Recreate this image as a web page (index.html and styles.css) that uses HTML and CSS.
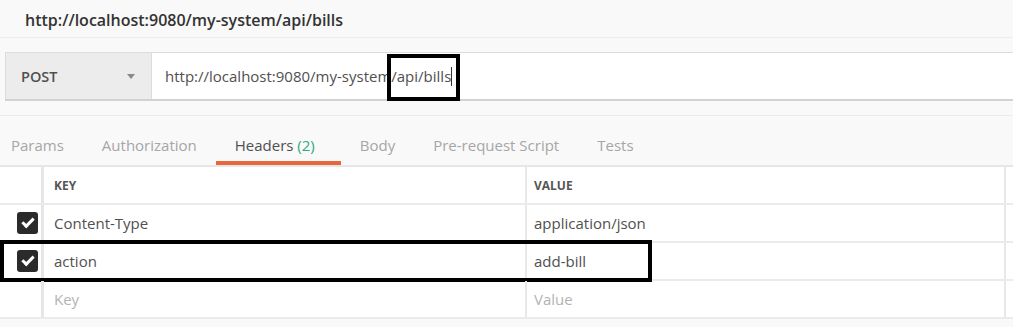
FILE: index.html
```html
<!DOCTYPE html>
<html lang="en">
<head>
    <meta charset="UTF-8">
    <title>POST my-system/api/bills</title>
    <link rel="stylesheet" href="styles.css">
</head>
<body>
    <div class="title">http://localhost:9080/my-system/api/bills</div>

    <div class="request">
        <div class="method">
            <span>POST</span>
            <span class="caret"></span>
        </div>
        <div class="url">
            <span>http://localhost:9080/my-system/api/bills</span><span class="cursor"></span>
            <div class="mark mark-url"></div>
        </div>
    </div>

    <div class="tabs">
        <div class="tab">Params</div>
        <div class="tab">Authorization</div>
        <div class="tab active">Headers <span class="count">(2)</span></div>
        <div class="tab">Body</div>
        <div class="tab">Pre-request Script</div>
        <div class="tab">Tests</div>
    </div>

    <div class="table">
        <div class="row head">
            <div class="cell check"></div>
            <div class="cell key">KEY</div>
            <div class="cell value">VALUE</div>
            <div class="cell extra"></div>
        </div>
        <div class="row">
            <div class="cell check"><span class="box"></span></div>
            <div class="cell key">Content-Type</div>
            <div class="cell value">application/json</div>
            <div class="cell extra"></div>
        </div>
        <div class="row">
            <div class="cell check"><span class="box"></span></div>
            <div class="cell key">action</div>
            <div class="cell value">add-bill</div>
            <div class="cell extra"></div>
            <div class="mark mark-row"></div>
        </div>
        <div class="row">
            <div class="cell check"></div>
            <div class="cell key placeholder">Key</div>
            <div class="cell value placeholder">Value</div>
            <div class="cell extra"></div>
        </div>
    </div>
</body>
</html>
```

FILE: styles.css
```css
/* General Styles */
body {
    margin: 0;
    background: #f9f9f9;
    font-family: 'Open Sans', 'Noto Sans', sans-serif;
    color: #505050;
}

.title {
    height: 37px;
    line-height: 40px;
    padding-left: 25px;
    font-size: 16px;
    font-weight: 600;
    color: #333;
    border-bottom: 1px solid #ededed;
    overflow: hidden;
}

/* Request bar */
.request {
    display: flex;
    height: 46px;
    margin: 14px 0 0 5px;
    border-top: 1px solid #dcdcdc;
    border-bottom: 2px solid #d2d2d2;
}

.method {
    width: 130px;
    padding-left: 15px;
    display: flex;
    align-items: center;
    justify-content: space-between;
    background: #ececec;
    border-left: 1px solid #dcdcdc;
    font-size: 14.5px;
    font-weight: 600;
    color: #505050;
}

.caret {
    width: 0;
    height: 0;
    margin-right: 16px;
    border-left: 4px solid transparent;
    border-right: 4px solid transparent;
    border-top: 5px solid #8a8a8a;
}

.url {
    position: relative;
    flex: 1;
    display: flex;
    align-items: center;
    padding-left: 13px;
    background: white;
    border-left: 1px solid #dcdcdc;
    font-size: 15px;
    color: #505050;
}

.cursor {
    width: 1px;
    height: 19px;
    background: #333;
}

.mark {
    position: absolute;
    border: 4px solid #000;
    box-sizing: border-box;
}

.mark-url {
    left: 235px;
    top: 1px;
    width: 73px;
    height: 47px;
}

/* Tabs */
.tabs {
    display: flex;
    height: 49px;
    margin-top: 14px;
    border-top: 1px solid #ececec;
    border-bottom: 2px solid #e6e6e6;
}

.tab {
    padding: 0 19px;
    height: 45px;
    line-height: 58px;
    font-size: 15px;
    color: #a6a6a6;
    border-bottom: 4px solid transparent;
}

.tab:first-child {
    padding-left: 11px;
}

.tab.active {
    padding-right: 26px;
    color: #505050;
    border-bottom-color: #e8683e;
}

.count {
    color: #2fa981;
}

/* Headers table */
.table {
    background: white;
    border-bottom: 2px solid #ebebeb;
}

.row {
    position: relative;
    display: flex;
    height: 36px;
    border-bottom: 2px solid #ebebeb;
}

.row:last-child {
    border-bottom: none;
}

.cell {
    display: flex;
    align-items: center;
    font-size: 15px;
    color: #505050;
}

.check {
    width: 44px;
    padding-left: 17px;
    box-sizing: border-box;
    border-right: 3px solid #e6e6e6;
}

.key {
    width: 483px;
    padding-left: 10px;
    box-sizing: border-box;
    border-right: 2px solid #e8e8e8;
}

.value {
    width: 479px;
    padding-left: 7px;
    box-sizing: border-box;
    border-right: 2px solid #e8e8e8;
}

.extra {
    flex: 1;
}

.head .cell {
    font-size: 12px;
    font-weight: 700;
    color: #555;
}

.placeholder {
    color: #b3b3b3;
}

.box {
    position: relative;
    width: 21px;
    height: 22px;
    border-radius: 3px;
    background: #2b2b2b;
}

.box::after {
    content: '';
    position: absolute;
    top: 6px;
    left: 5px;
    width: 9px;
    height: 4px;
    border-left: 3px solid white;
    border-bottom: 3px solid white;
    transform: rotate(-45deg);
}

.mark-row {
    left: 0;
    top: -3px;
    width: 652px;
    height: 42px;
}
```
